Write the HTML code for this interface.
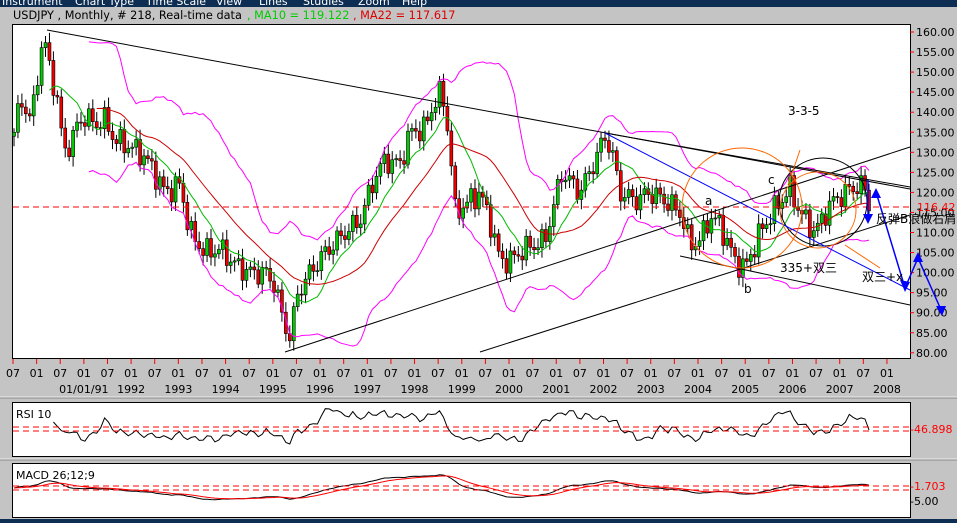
<!DOCTYPE html>
<html><head><meta charset="utf-8">
<style>
html,body{margin:0;padding:0;background:#c4c4c4;width:957px;height:523px;overflow:hidden}
svg{display:block}
text{font-family:"DejaVu Sans","Liberation Sans","Noto Sans CJK SC",sans-serif}
</style></head>
<body>
<svg id="s" width="957" height="523" xmlns="http://www.w3.org/2000/svg">
<rect x="0" y="0" width="957" height="7" fill="#0d2d52"/>
<g fill="#fff" font-size="11">
<text x="2" y="5">Instrument</text><text x="75" y="5">Chart Type</text><text x="146" y="5">Time Scale</text><text x="216" y="5">View</text><text x="259" y="5">Lines</text><text x="303" y="5">Studies</text><text x="358" y="5">Zoom</text><text x="402" y="5">Help</text>
</g>
<text x="13" y="19" font-size="11.3" fill="#000">USDJPY , Monthly, # 218, Real-time data</text>
<text x="247" y="19" font-size="11.3" fill="#0c0">, MA10 = 119.122</text>
<text x="353" y="19" font-size="11.3" fill="#d00">, MA22 = 117.617</text>
<rect x="12.5" y="24.5" width="898" height="334" fill="#fff" stroke="#000"/>
<rect x="12.5" y="402.5" width="898" height="54" fill="#fff" stroke="#000"/>
<rect x="12.5" y="463.5" width="898" height="54" fill="#fff" stroke="#000"/>
<line x1="0" y1="397" x2="957" y2="397" stroke="#eee"/><line x1="0" y1="398" x2="957" y2="398" stroke="#888"/>
<line x1="0" y1="459" x2="957" y2="459" stroke="#eee"/><line x1="0" y1="460" x2="957" y2="460" stroke="#888"/>
<rect x="0" y="519" width="957" height="4" fill="#0d2d52"/>
<g id="g"></g>
<g font-size="11" fill="#000" id="ax"></g>
<line x1="13" y1="207" x2="910" y2="207" stroke="#f00" stroke-dasharray="6,4"/>
<text x="917" y="211" font-size="11" fill="#f00">116.42</text>
<g stroke="#000" fill="none">
<line x1="47" y1="30" x2="910" y2="189"/>
<line x1="605" y1="133" x2="910" y2="187"/>
<line x1="285" y1="352" x2="910" y2="147"/>
<line x1="480" y1="352" x2="910" y2="215"/>
<line x1="680" y1="256" x2="910" y2="305"/>
<circle cx="823" cy="202" r="44"/>
</g>
<line x1="605" y1="133" x2="910" y2="290" stroke="#00f"/>
<g stroke="#f60" fill="none">
<circle cx="742" cy="208" r="60"/>
<circle cx="818" cy="210" r="38"/>
<line x1="800" y1="150" x2="788" y2="185"/>
<line x1="880" y1="268" x2="845" y2="245"/>
</g>
<g stroke="#00f" fill="none" stroke-width="1.5">
<polyline points="868,180 868,222"/>
<polyline points="876,192 905,288 918,258 942,312"/>
</g>
<g fill="#00f">
<polygon points="863,214 873,214 868,224"/><polygon points="871,198 881,198 876,188"/>
<polygon points="900,280 910,282 905,292"/><polygon points="913,262 923,262 918,252"/><polygon points="936,306 946,306 942,316"/>
</g>
<g fill="#000" font-size="12">
<text x="788" y="115" font-family="Liberation Serif,serif">3-3-5</text>
<text x="705" y="205">a</text><text x="744" y="293">b</text><text x="768" y="184">c</text>
</g>
<g font-size="12" fill="#000">
<text x="780" y="272" font-family="'Liberation Sans','Noto Sans CJK SC',sans-serif">335+双三</text>
<text x="876" y="223" font-family="'Liberation Sans','Noto Sans CJK SC',sans-serif">反弹B浪做右肩</text>
<text x="862" y="281" font-family="'Liberation Sans','Noto Sans CJK SC',sans-serif">双三+x</text>
</g>
<text x="16" y="418" font-size="11">RSI 10</text>
<text x="16" y="479" font-size="11">MACD 26;12;9</text>
<g stroke="#f00" stroke-dasharray="6,4"><line x1="13" y1="427" x2="910" y2="427"/><line x1="13" y1="431" x2="910" y2="431"/><line x1="13" y1="486" x2="910" y2="486"/><line x1="13" y1="490" x2="910" y2="490"/></g>
<g font-size="11"><text x="910" y="433" fill="#f00">-46.898</text><text x="910" y="490" fill="#f00">-1.703</text><text x="910" y="505" fill="#000">-5.00</text></g>
</svg>
<script>
var NS="http://www.w3.org/2000/svg",g=document.getElementById('g'),ax=document.getElementById('ax');
function el(n,a,p){var e=document.createElementNS(NS,n);for(var k in a)e.setAttribute(k,a[k]);(p||g).appendChild(e);return e;}
function Y(p){return 32+(160-p)*4.01;}
for(var p=80;p<=160;p+=5){var y=Y(p);el('line',{x1:910,y1:y,x2:914,y2:y,stroke:'#f00'});el('text',{x:916,y:y+4},ax).textContent=p.toFixed(2);}
for(var i=0;i<=37;i++){var x=13+i*23.62;el('line',{x1:x,y1:359,x2:x,y2:364,stroke:'#f00'});var t=el('text',{x:x,y:377,'text-anchor':'middle'},ax);t.textContent=i%2?'01':'07';
if(i%2){var yr=1990+(i-1)/2;var lab=yr==1991?'01/01/91':(yr>=1992?String(yr):'');if(lab){var t2=el('text',{x:x,y:393,'text-anchor':'middle'},ax);t2.textContent=lab;}}}
var K=[[14,135],[18,140],[24,143],[30,138],[36,145],[42,158],[47,155],[52,148],[58,143],[63,130],[70,132],[78,137],[85,139],[95,137],[105,138],[115,133],[125,132],[140,130],[150,127],[165,120],[180,122],[190,110],[205,105],[220,106],[235,102],[250,100],[265,100],[275,97],[283,88],[290,84],[298,95],[310,100],[325,105],[345,110],[360,113],[375,124],[385,128],[400,127],[410,135],[425,136],[435,143],[442,145],[450,132],[455,115],[465,117],[480,120],[490,113],[500,103],[510,103],[525,106],[545,108],[555,118],[562,125],[580,120],[595,128],[605,134],[612,130],[620,120],[635,118],[650,120],[665,118],[680,115],[690,107],[700,108],[710,114],[720,112],[735,103],[745,101],[760,110],[775,116],[790,121],[800,115],[815,110],[830,117],[845,120],[860,122],[866,120],[870,116]];
function interp(x){for(var i=0;i<K.length-1;i++){if(x<=K[i+1][0])return K[i][1]+(K[i+1][1]-K[i][1])*(x-K[i][0])/(K[i+1][0]-K[i][0]);}return K[K.length-1][1];}
var C=[],X=[];for(var t=0;;t++){var x=14+t*3.94;if(x>871)break;X.push(x);C.push(interp(x)+2.2*Math.sin(t*1.7)+1.3*Math.sin(t*3.1));}
var n=C.length;
function ma(a,k){var r=[];for(var i=0;i<a.length;i++){if(i<k-1){r.push(null);continue;}var s=0;for(var j=i-k+1;j<=i;j++)s+=a[j];r.push(s/k);}return r;}
for(var i=0;i<n;i++){var o=i?C[i-1]:C[i]-1,c=C[i],h=Math.max(o,c)+1+1.5*Math.abs(Math.sin(i*2.3)),l=Math.min(o,c)-1-1.5*Math.abs(Math.cos(i*1.9));var x=X[i];
el('line',{x1:x,y1:Y(h),x2:x,y2:Y(l),stroke:'#000'});var yt=Y(Math.max(o,c)),yb=Y(Math.min(o,c));el('rect',{x:x-1.5,y:yt,width:3,height:Math.max(1,yb-yt),fill:c>=o?'#0c0':'#e00',stroke:'#000','stroke-width':0.6});}
function line(arr,col,xs,yf,p){var d='';for(var i=0;i<arr.length;i++){if(arr[i]==null)continue;d+=(d?'L':'M')+xs[i].toFixed(1)+','+yf(arr[i]).toFixed(1);}el('path',{d:d,stroke:col,fill:'none'},p);}
var m10=ma(C,10),m22=ma(C,22),m20=ma(C,20),up=[],dn=[];
for(var i=0;i<n;i++){if(m20[i]==null){up.push(null);dn.push(null);continue;}var s=0;for(var j=i-19;j<=i;j++)s+=(C[j]-m20[i])*(C[j]-m20[i]);s=Math.sqrt(s/20);var w=Math.max(2.2*s,5);up.push(m20[i]+w);dn.push(m20[i]-w);}
line(m10,'#0b0',X,Y);line(m22,'#c00',X,Y);line(up,'#f0f',X,Y);line(dn,'#f0f',X,Y);
var rsi=[];for(var i=0;i<n;i++){if(i<10){rsi.push(null);continue;}var u=0,d=0;for(var j=i-9;j<=i;j++){var df=C[j]-C[j-1];if(df>0)u+=df;else d-=df;}rsi.push(100*u/(u+d+1e-9));}
line(rsi,'#000',X,function(v){return Math.max(405,Math.min(454,429-(v-47)*0.5));});
function ema(a,k){var r=[],al=2/(k+1),e=a[0];for(var i=0;i<a.length;i++){e=a[i]*al+e*(1-al);r.push(e);}return r;}
var e12=ema(C,12),e26=ema(C,26),mc=[];for(var i=0;i<n;i++)mc.push(e12[i]-e26[i]);var sg=ema(mc,9);
var my=function(v){return Math.max(466,Math.min(515,488-v*1.6));};
line(mc,'#000',X,my);line(sg,'#f00',X,my);
</script>
</body></html>
